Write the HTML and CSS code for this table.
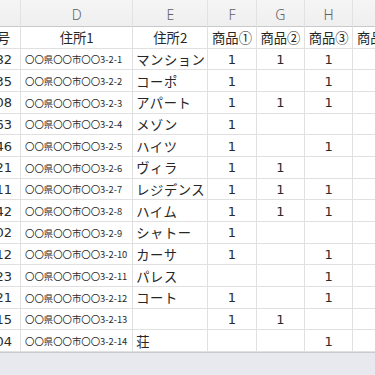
FILE: index.html
```html
<!DOCTYPE html>
<html lang="ja">
<head>
<meta charset="utf-8">
<title>Sheet</title>
<link rel="stylesheet" href="styles.css">
</head>
<body>
<div class="sheet">
  <div class="grid">
    <div class="ch c0"></div><div class="ch">D</div><div class="ch">E</div><div class="ch">F</div><div class="ch">G</div><div class="ch">H</div><div class="ch">I</div>

    <div class="c c0 hd"><span>番号</span></div><div class="c ctr">住所1</div><div class="c ctr">住所2</div><div class="c ctr">商品①</div><div class="c ctr">商品②</div><div class="c ctr">商品③</div><div class="c ctr ov">商品④</div>

    <div class="c c0 num"><span>82</span></div><div class="c adr">〇〇県〇〇市〇〇3-2-1</div><div class="c txt">マンション</div><div class="c ctr num">1</div><div class="c ctr num">1</div><div class="c ctr num">1</div><div class="c"></div>
    <div class="c c0 num"><span>35</span></div><div class="c adr">〇〇県〇〇市〇〇3-2-2</div><div class="c txt">コーポ</div><div class="c ctr num">1</div><div class="c ctr num"></div><div class="c ctr num">1</div><div class="c"></div>
    <div class="c c0 num"><span>08</span></div><div class="c adr">〇〇県〇〇市〇〇3-2-3</div><div class="c txt">アパート</div><div class="c ctr num">1</div><div class="c ctr num">1</div><div class="c ctr num">1</div><div class="c"></div>
    <div class="c c0 num"><span>63</span></div><div class="c adr">〇〇県〇〇市〇〇3-2-4</div><div class="c txt">メゾン</div><div class="c ctr num">1</div><div class="c ctr num"></div><div class="c ctr num"></div><div class="c"></div>
    <div class="c c0 num"><span>46</span></div><div class="c adr">〇〇県〇〇市〇〇3-2-5</div><div class="c txt">ハイツ</div><div class="c ctr num">1</div><div class="c ctr num"></div><div class="c ctr num">1</div><div class="c"></div>
    <div class="c c0 num"><span>21</span></div><div class="c adr">〇〇県〇〇市〇〇3-2-6</div><div class="c txt">ヴィラ</div><div class="c ctr num">1</div><div class="c ctr num">1</div><div class="c ctr num"></div><div class="c"></div>
    <div class="c c0 num"><span>11</span></div><div class="c adr">〇〇県〇〇市〇〇3-2-7</div><div class="c txt">レジデンス</div><div class="c ctr num">1</div><div class="c ctr num">1</div><div class="c ctr num">1</div><div class="c"></div>
    <div class="c c0 num"><span>42</span></div><div class="c adr">〇〇県〇〇市〇〇3-2-8</div><div class="c txt">ハイム</div><div class="c ctr num">1</div><div class="c ctr num">1</div><div class="c ctr num">1</div><div class="c"></div>
    <div class="c c0 num"><span>02</span></div><div class="c adr">〇〇県〇〇市〇〇3-2-9</div><div class="c txt">シャトー</div><div class="c ctr num">1</div><div class="c ctr num"></div><div class="c ctr num"></div><div class="c"></div>
    <div class="c c0 num"><span>12</span></div><div class="c adr">〇〇県〇〇市〇〇3-2-10</div><div class="c txt">カーサ</div><div class="c ctr num">1</div><div class="c ctr num"></div><div class="c ctr num">1</div><div class="c"></div>
    <div class="c c0 num"><span>23</span></div><div class="c adr">〇〇県〇〇市〇〇3-2-11</div><div class="c txt">パレス</div><div class="c ctr num"></div><div class="c ctr num"></div><div class="c ctr num">1</div><div class="c"></div>
    <div class="c c0 num"><span>21</span></div><div class="c adr">〇〇県〇〇市〇〇3-2-12</div><div class="c txt">コート</div><div class="c ctr num">1</div><div class="c ctr num"></div><div class="c ctr num">1</div><div class="c"></div>
    <div class="c c0 num"><span>15</span></div><div class="c adr">〇〇県〇〇市〇〇3-2-13</div><div class="c txt"></div><div class="c ctr num">1</div><div class="c ctr num">1</div><div class="c ctr num"></div><div class="c"></div>
    <div class="c c0 num"><span>04</span></div><div class="c adr">〇〇県〇〇市〇〇3-2-14</div><div class="c txt">荘</div><div class="c ctr num"></div><div class="c ctr num"></div><div class="c ctr num">1</div><div class="c"></div>
  </div>
  <div class="strip"></div>
</div>
</body>
</html>
```

FILE: styles.css
```css
html, body {
  margin: 0;
  padding: 0;
  background: #ffffff;
  overflow: hidden;
}

.sheet {
  width: 375px;
  height: 375px;
  overflow: hidden;
  display: flex;
  flex-direction: column;
  font-family: "Noto Sans CJK JP", "Noto Sans", sans-serif;
  color: #262626;
}

.grid {
  display: grid;
  grid-template-columns: 21px 112.33px 75px 48.33px 48.33px 48.33px 48.33px;
  grid-template-rows: 27px repeat(15, 21.667px);
  width: 402px;
  flex: none;
}

.ch {
  background: linear-gradient(#f5f5f5, #efefef);
  border-right: 1px solid #e2e2e2;
  border-bottom: 1px solid #c9c9c9;
  color: #616161;
  font-family: "Noto Sans", "DejaVu Sans", sans-serif;
  font-size: 14px;
  font-weight: 300;
  display: flex;
  align-items: center;
  justify-content: center;
  padding-top: 2px;
  box-sizing: border-box;
}

.c {
  border-right: 1px solid #e0e0e0;
  border-bottom: 1px solid #e0e0e0;
  display: flex;
  align-items: center;
  font-size: 13.3px;
  white-space: nowrap;
  overflow: hidden;
  box-sizing: border-box;
  min-width: 0;
  padding-top: 1px;
}

.ctr {
  justify-content: center;
}

.ov {
  overflow: visible;
}

.c0 {
  justify-content: flex-end;
  overflow: hidden;
}

.c0.hd span {
  padding-right: 10px;
}

.c0.num span {
  padding-right: 8px;
}

.num {
  font-family: "DejaVu Sans", sans-serif;
  font-size: 13px;
  color: #2a2a2a;
}

.adr {
  font-size: 9.4px;
  padding-left: 4px;
  color: #2a2a2a;
}

.txt {
  padding-left: 3px;
  letter-spacing: 0.5px;
}

.strip {
  flex: 1;
  background: #e8e9ee;
  border-top: 1px solid #c9cad0;
}
```
